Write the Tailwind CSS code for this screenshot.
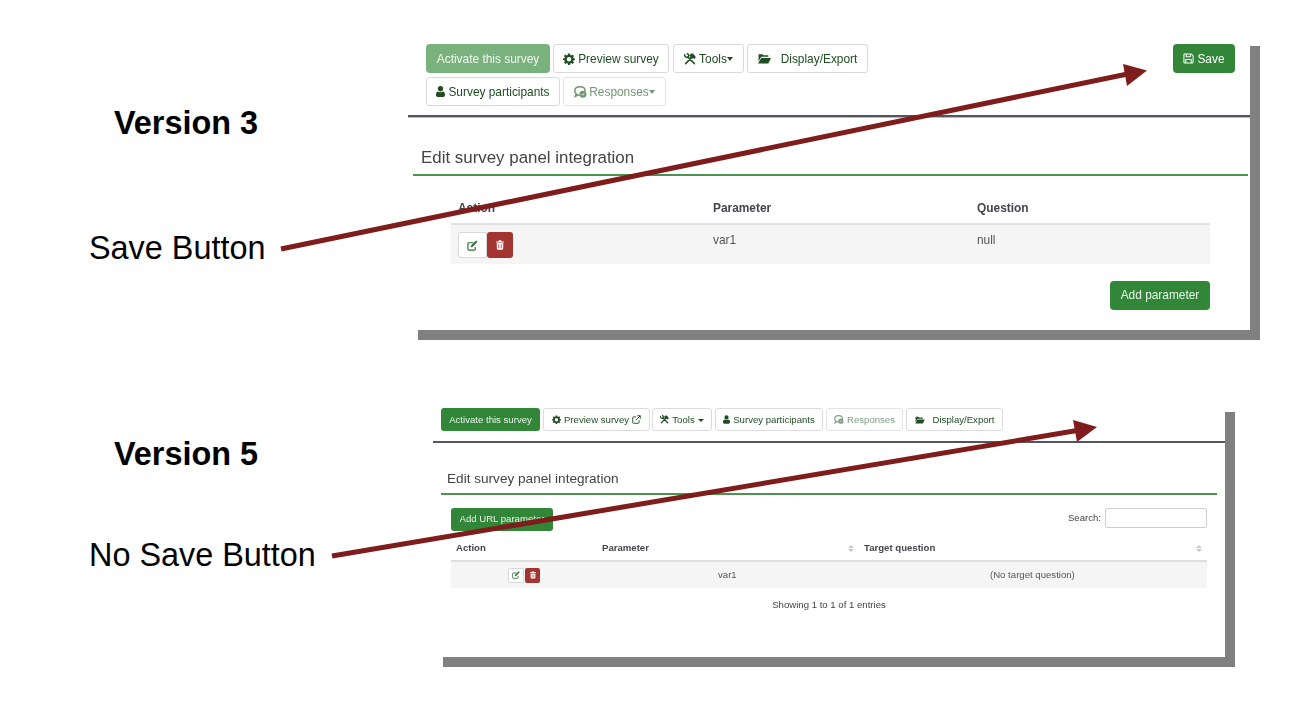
<!DOCTYPE html>
<html>
<head>
<meta charset="utf-8">
<script src="https://cdn.jsdelivr.net/npm/@tailwindcss/browser@4"></script>
</head>
<body class="bg-white">
<svg class="hidden" width="0" height="0">
  <symbol id="gear" viewBox="0 0 24 24"><path fill="currentColor" fill-rule="evenodd" d="M10 1h4l.6 3.2 1.900.8L19.200 3.200l2.800 2.800L20.200 8.700l.8 1.900L24 11v3l-3 .6-.8 1.900 1.800 2.700-2.800 2.800-2.700-1.800-1.900.8L14 24h-4l-.6-3-1.900-.8-2.700 1.800L2 19.200l1.800-2.700-.8-1.900L0 14v-3l3-.4.8-1.900L2 6l2.800-2.800L7.500 5l1.900-.8zM12 8a4.500 4.500 0 1 0 0 9 4.500 4.500 0 0 0 0-9z"/></symbol>
  <symbol id="tools" viewBox="0 0 24 24"><path fill="none" stroke="currentColor" stroke-width="3.600" stroke-linecap="round" d="M3.500 21L15 9M20.500 21L8 8"/><path fill="none" stroke="currentColor" stroke-width="3" d="M2 2.500c-1.500 3 .5 6.500 4.500 6.500 2 0 3-1.500 3-3.500 0-2-1.500-4-4-4.500"/><path fill="currentColor" d="M10 5l5-4h3l5 6v3l-2 2-3-2-3 2-3-3 1-2z"/></symbol>
  <symbol id="folder" viewBox="0 0 24 20"><path fill="currentColor" d="M1 2h7l2 2h9v3H6L1 15zM6 9h18l-5 10H0z"/></symbol>
  <symbol id="user" viewBox="0 0 20 24"><path fill="currentColor" d="M10 0a6 6 0 0 1 6 6c0 3-2 6-6 6s-6-3-6-6a6 6 0 0 1 6-6zM4 12c2 2 10 2 12 0 3 1 4 4 4 8 0 3-2 4-4 4H4c-2 0-4-1-4-4 0-4 1-7 4-8z"/></symbol>
  <symbol id="comments" viewBox="0 0 24 22"><path fill="none" stroke="currentColor" stroke-width="2.800" d="M11 1.500c5.500 0 9.500 3 9.500 7.500 0 1.500-.5 2.500-1 3.500M10 17c-1 0-2 0-3-.5L2.500 19 4 14.500C2.500 13 1.500 11 1.500 9c0-4.500 4-7.500 9.500-7.500"/><circle cx="16.500" cy="15" r="6.500" fill="currentColor"/><path fill="none" stroke="#fff" stroke-width="1.500" d="M14 15l2 2 3-4"/></symbol>
  <symbol id="ext" viewBox="0 0 24 24"><path fill="none" stroke="currentColor" stroke-width="2.500" d="M19 14v6a2 2 0 0 1-2 2H4a2 2 0 0 1-2-2V7a2 2 0 0 1 2-2h7M14 2h8v8M22 2L10 14"/></symbol>
  <symbol id="edit" viewBox="0 0 24 24"><path fill="none" stroke="currentColor" stroke-width="2.500" d="M18 15v5a2 2 0 0 1-2 2H4a2 2 0 0 1-2-2V8a2 2 0 0 1 2-2h10"/><path fill="currentColor" d="M20 1l3 3L12 15l-4 1 1-4z"/></symbol>
  <symbol id="trash" viewBox="0 0 20 24"><path fill="currentColor" fill-rule="evenodd" d="M7 0h6l1 3h6v2.500H0V3h6zM2 7h16v14a3 3 0 0 1-3 3H5a3 3 0 0 1-3-3zM6 10v10h2V10zM12 10v10h2V10z"/></symbol>
  <symbol id="save" viewBox="0 0 24 24"><path fill="none" stroke="currentColor" stroke-width="2.200" d="M3 2h15l4 4v14a2 2 0 0 1-2 2H4a2 2 0 0 1-2-2V3zM7 2v6h9V2M6 22v-8h12v8"/></symbol>
</svg>

<div class="relative w-[1297px] h-[701px] overflow-hidden bg-white font-['Liberation_Sans',Arial,sans-serif]">

  <!-- slide labels -->
  <div class="absolute left-[114px] top-[104px] text-[32.4px] leading-[38px] font-bold text-black">Version 3</div>
  <div class="absolute left-[89px] top-[229px] text-[32.4px] leading-[38px] text-black">Save Button</div>
  <div class="absolute left-[114px] top-[435px] text-[32.4px] leading-[38px] font-bold text-black">Version 5</div>
  <div class="absolute left-[89px] top-[536px] text-[32.4px] leading-[38px] text-black">No Save Button</div>

  <!-- Version 3 screenshot -->
  <div class="absolute left-[408px] top-[44px] w-[842px] h-[286px] text-[11.9px] text-[#1f4d22] blur-[0.35px]">
    <div class="flex justify-between pl-[18px] pr-[15px]">
      <div class="flex flex-col gap-[4px]">
        <div class="flex gap-[3px] h-[29px]">
          <div class="w-[124px] pt-[2px] flex items-center justify-center rounded-[4px] bg-[#7ab27d] text-white/90">Activate this survey</div>
          <div class="w-[116px] pt-[2px] flex items-center justify-center gap-[3px] rounded-[3px] border border-[#d9d9d9] bg-white"><svg class="w-[12px] h-[12px] -translate-y-[1px]"><use href="#gear"/></svg>Preview survey</div>
          <div class="w-[71px] pt-[2px] ml-[1px] flex items-center justify-center gap-[3px] rounded-[3px] border border-[#d9d9d9] bg-white"><svg class="w-[12px] h-[12px] -translate-y-[1px]"><use href="#tools"/></svg><span class="flex items-center">Tools<span class="w-0 h-0 border-x-[3.500px] border-x-transparent border-t-[4px] border-t-[#1f4d22]"></span></span></div>
          <div class="w-[121px] pt-[2px] flex items-center justify-center gap-[10px] rounded-[3px] border border-[#d9d9d9] bg-white"><svg class="w-[13px] h-[11px] -translate-y-[1px]"><use href="#folder"/></svg>Display/Export</div>
        </div>
        <div class="flex gap-[3px] h-[29px]">
          <div class="w-[134px] pt-[2px] flex items-center justify-center gap-[3px] rounded-[3px] border border-[#d9d9d9] bg-white"><svg class="w-[9px] h-[11px] -translate-y-[1px]"><use href="#user"/></svg>Survey participants</div>
          <div class="w-[103px] pt-[2px] flex items-center justify-center gap-[2px] rounded-[3px] border border-[#e4e4e4] bg-white text-[#6f9872]"><svg class="w-[13px] h-[12px] -translate-y-[1px]"><use href="#comments"/></svg><span class="flex items-center">Responses<span class="w-0 h-0 border-x-[3.500px] border-x-transparent border-t-[4px] border-t-[#6f9872]"></span></span></div>
        </div>
      </div>
      <div class="w-[62px] h-[29px] pt-[2px] flex items-center justify-center gap-[3px] rounded-[4px] bg-[#328637] text-white"><svg class="w-[11px] h-[11px] -translate-y-[1px]"><use href="#save"/></svg>Save</div>
    </div>
    <div class="mt-[9px] h-[3px] bg-[#55555f] border-b border-[#b9b9be]"></div>
    <div class="pl-[5px] pr-[2px]">
      <div class="h-[58px] pl-[8px] pt-[27px] border-b-2 border-[#4a9350]">
        <div class="text-[16.9px] leading-[26px] text-[#444]">Edit survey panel integration</div>
      </div>
    </div>
    <div class="ml-[43px] w-[759px] mt-[19px]">
      <div class="grid grid-cols-[255px_264px_1fr] h-[30px] items-center pl-[7px] font-bold text-[#44444c] border-b-2 border-[#e2e2e2]">
        <div>Action</div><div>Parameter</div><div>Question</div>
      </div>
      <div class="grid grid-cols-[255px_264px_1fr] h-[39px] pl-[7px] bg-[#f5f5f5] text-[#555]">
        <div class="flex pt-[7px]">
          <div class="w-[29px] h-[26px] flex items-center justify-center rounded-l-[3px] border border-[#d9d9d9] bg-white text-[#2f6b33]"><svg class="w-[11px] h-[11px]"><use href="#edit"/></svg></div>
          <div class="w-[26px] h-[26px] flex items-center justify-center rounded-[3px] bg-[#a23530] text-white"><svg class="w-[8px] h-[10px]"><use href="#trash"/></svg></div>
        </div>
        <div class="pt-[7px]">var1</div>
        <div class="pt-[7px]">null</div>
      </div>
      <div class="flex justify-end mt-[17px]">
        <div class="w-[100px] h-[29px] flex items-center justify-center rounded-[4px] bg-[#328637] text-white/90">Add parameter</div>
      </div>
    </div>
  </div>
  <div class="absolute left-[1250px] top-[46px] w-[10px] h-[294px] bg-[#808080]"></div>
  <div class="absolute left-[418px] top-[330px] w-[842px] h-[10px] bg-[#808080]"></div>

  <!-- Version 5 screenshot -->
  <div class="absolute left-[433px] top-[408px] w-[792px] h-[249px] text-[9.6px] text-[#1f4d22] blur-[0.35px]">
    <div class="flex gap-[3px] h-[23px] pl-[8px]">
      <div class="w-[99px] pt-[2px] flex items-center justify-center rounded-[3px] bg-[#328637] text-white/90">Activate this survey</div>
      <div class="w-[107px] pt-[2px] flex items-center justify-center gap-[3px] rounded-[3px] border border-[#dcdcdc] bg-white"><svg class="w-[9px] h-[9px] -translate-y-[1px]"><use href="#gear"/></svg>Preview survey<svg class="w-[9px] h-[9px] -translate-y-[1px]"><use href="#ext"/></svg></div>
      <div class="w-[60px] pt-[2px] -ml-[1px] flex items-center justify-center gap-[3px] rounded-[3px] border border-[#dcdcdc] bg-white"><svg class="w-[9px] h-[9px] -translate-y-[1px]"><use href="#tools"/></svg>Tools<span class="w-0 h-0 border-x-[3px] border-x-transparent border-t-[3px] border-t-[#1f4d22]"></span></div>
      <div class="w-[108px] pt-[2px] flex items-center justify-center gap-[3px] rounded-[3px] border border-[#dcdcdc] bg-white"><svg class="w-[7px] h-[9px] -translate-y-[1px]"><use href="#user"/></svg>Survey participants</div>
      <div class="w-[77px] pt-[2px] flex items-center justify-center gap-[3px] rounded-[3px] border border-[#e4e4e4] bg-white text-[#7d9f80]"><svg class="w-[10px] h-[9px] -translate-y-[1px]"><use href="#comments"/></svg>Responses</div>
      <div class="w-[97px] pt-[2px] flex items-center justify-center gap-[8px] rounded-[3px] border border-[#dcdcdc] bg-white"><svg class="w-[10px] h-[8px] -translate-y-[1px]"><use href="#folder"/></svg>Display/Export</div>
    </div>
    <div class="mt-[10px] h-[2px] bg-[#55555f]"></div>
    <div class="pl-[8px] pr-[8px]">
      <div class="h-[52px] pt-[26px] pl-[6px] border-b-2 border-[#4a9350]">
        <div class="text-[13.6px] leading-[20px] text-[#444]">Edit survey panel integration</div>
      </div>
    </div>
    <div class="ml-[18px] w-[756px] mt-[13px]">
      <div class="flex justify-between items-start h-[29px]">
        <div class="w-[102px] h-[23px] flex items-center justify-center rounded-[3px] bg-[#328637] text-white/90">Add URL parameter</div>
        <div class="flex items-center gap-[4px] text-[#444]">Search:<div class="w-[102px] h-[20px] rounded-[2px] border border-[#cfcfcf] bg-white"></div></div>
      </div>
      <div class="grid grid-cols-[146px_262px_1fr] h-[25px] items-center pl-[5px] font-bold text-[#44444c] border-b-2 border-[#dedede]">
        <div>Action</div>
        <div class="flex items-center justify-between pr-[10px]">Parameter<span class="flex flex-col gap-[1px]"><span class="w-0 h-0 border-x-[3px] border-x-transparent border-b-[3px] border-b-[#c8c8c8]"></span><span class="w-0 h-0 border-x-[3px] border-x-transparent border-t-[3px] border-t-[#c8c8c8]"></span></span></div>
        <div class="flex items-center justify-between pr-[5px]">Target question<span class="flex flex-col gap-[1px]"><span class="w-0 h-0 border-x-[3px] border-x-transparent border-b-[3px] border-b-[#c8c8c8]"></span><span class="w-0 h-0 border-x-[3px] border-x-transparent border-t-[3px] border-t-[#c8c8c8]"></span></span></div>
      </div>
      <div class="grid grid-cols-[267px_272px_1fr] h-[26px] items-center bg-[#f5f5f5] text-[#555]">
        <div class="flex pl-[57px]">
          <div class="w-[16px] h-[15px] flex items-center justify-center rounded-l-[2px] border border-[#d9d9d9] bg-white text-[#2f6b33]"><svg class="w-[8px] h-[8px]"><use href="#edit"/></svg></div>
          <div class="w-[15px] h-[15px] ml-[1px] flex items-center justify-center rounded-[2px] bg-[#a23530] text-white"><svg class="w-[6px] h-[8px]"><use href="#trash"/></svg></div>
        </div>
        <div>var1</div>
        <div>(No target question)</div>
      </div>
      <div class="mt-[10px] text-center text-[#444] leading-[14px]">Showing 1 to 1 of 1 entries</div>
    </div>
  </div>
  <div class="absolute left-[1225px] top-[412px] w-[10px] h-[255px] bg-[#808080]"></div>
  <div class="absolute left-[443px] top-[657px] w-[792px] h-[10px] bg-[#808080]"></div>

  <!-- annotation arrows -->
  <svg class="absolute inset-0 w-[1297px] h-[701px] pointer-events-none" viewBox="0 0 1297 701">
    <line x1="281" y1="249" x2="1130" y2="73.500" stroke="#7f1c1c" stroke-width="5"/>
    <polygon points="1147,70.500 1123,64 1127,86" fill="#7f1c1c"/>
    <line x1="332" y1="556" x2="1080" y2="430" stroke="#7f1c1c" stroke-width="5"/>
    <polygon points="1097,427 1073,420 1077,442" fill="#7f1c1c"/>
  </svg>
</div>
</body>
</html>
